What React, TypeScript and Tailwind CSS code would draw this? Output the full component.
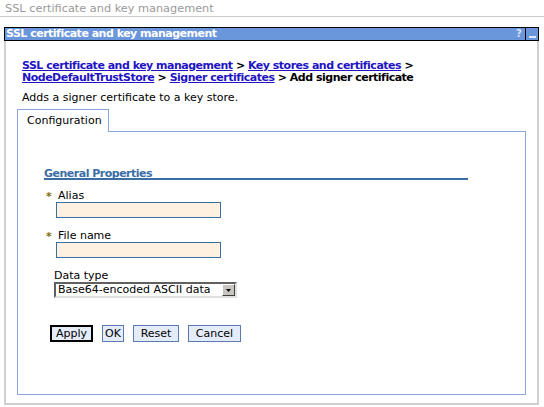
import React from "react";

const F = { fontFamily: '"DejaVu Sans", Verdana, sans-serif' } as React.CSSProperties;

function Star() {
  return <span className="inline-block w-[14px] pl-[2px] text-[#807000] text-[11px] leading-none font-bold">*</span>;
}

const LINK = "text-[#2214c4] underline";

export default function App() {
  return (
    <div className="w-[544px] h-[407px] bg-white overflow-hidden" style={F}>
      <div className="h-[17px] border-b border-[#cccccc] pl-[5px] text-[11.3px] leading-[17px] text-[#9a9a9a]">
        SSL certificate and key management
      </div>
      <div className="mt-[10px] ml-[4px] w-[535px]">
        <div className="flex h-[14px] border border-black bg-[#6a96dc]">
          <div className="flex-1 pl-[1px] text-[11px] leading-[12px] font-bold tracking-[-0.5px] text-white">
            SSL certificate and key management
          </div>
          <div className="w-[9px] text-[10px] leading-[12px] text-[#d8e4f8] font-bold">?</div>
          <div className="w-[13px] border-l border-black flex items-end justify-center pb-[2px]">
            <div className="w-[7px] h-[2px] bg-[#dde6f6]" />
          </div>
        </div>
        <div className="border-x-2 border-b-2 border-[#d0d0d0] h-[364px] pt-[19px]">
          <div className="pl-[16px] text-[11px] leading-[12px] font-bold tracking-[-0.5px] text-black">
            <div>
              <span className={LINK}>SSL certificate and key management</span> &gt;{" "}
              <span className={LINK}>Key stores and certificates</span> &gt;
            </div>
            <div>
              <span className={LINK}>NodeDefaultTrustStore</span> &gt;{" "}
              <span className={LINK}>Signer certificates</span> &gt; Add signer certificate
            </div>
          </div>
          <div className="pl-[16px] mt-[8px] text-[11px] leading-[12px] text-black">
            Adds a signer certificate to a key store.
          </div>
          <div className="ml-[11px] mr-[11px] mt-[5px]">
            <div className="flex h-[23px]">
              <div className="w-[92px] border-t border-x border-[#8aa6dc] pl-[9px] pt-[5px] text-[11px] leading-[12px] text-black">
                Configuration
              </div>
              <div className="flex-1 border-b border-[#8aa6dc]" />
            </div>
            <div className="h-[263px] border-x border-b border-[#8aa6dc] pl-[26px] pt-[36px]">
              <div className="w-[424px] h-[12px] border-b-2 border-[#3a6ea5] text-[11px] leading-[11px] font-bold tracking-[-0.5px] text-[#3a6ea5]">
                General Properties
              </div>
              <div className="mt-[10px] text-[11px] leading-[12px] text-black">
                <div className="h-[12px] flex items-center"><Star />Alias</div>
                <div className="ml-[12px] w-[165px] h-[16px] border border-[#3a6ea5] bg-[#fff1e0]" />
              </div>
              <div className="mt-[12px] text-[11px] leading-[12px] text-black">
                <div className="h-[12px] flex items-center"><Star />File name</div>
                <div className="ml-[12px] w-[165px] h-[16px] border border-[#3a6ea5] bg-[#fff1e0]" />
              </div>
              <div className="mt-[12px] ml-[10px] text-[11px] leading-[12px] text-black">
                <div className="h-[12px]">Data type</div>
                <div className="flex w-[183px] h-[16px] border-2 border-t-[#606060] border-l-[#606060] border-b-[#e0e0e0] border-r-[#e0e0e0] bg-white">
                  <div className="flex-1 pl-[2px] leading-[12px]">Base64-encoded ASCII data</div>
                  <div className="w-[13px] h-[12px] bg-[#c8c4c0] border border-t-white border-l-white border-b-[#404040] border-r-[#404040] flex items-center justify-center">
                    <svg width="5" height="3" viewBox="0 0 5 3"><path d="M0 0h5L2.5 3z" fill="#000" /></svg>
                  </div>
                </div>
              </div>
              <div className="mt-[27px] ml-[6px] flex gap-[9px] text-[11px] leading-[12px] text-black">
                <div className="h-[17px] w-[43px] border-2 border-black bg-[#e4ecfa] flex items-center justify-center">Apply</div>
                <div className="h-[17px] w-[22px] border border-[#5a7ab0] bg-[#e4ecfa] flex items-center justify-center">OK</div>
                <div className="h-[17px] w-[46px] border border-[#5a7ab0] bg-[#e4ecfa] flex items-center justify-center">Reset</div>
                <div className="h-[17px] w-[53px] border border-[#5a7ab0] bg-[#e4ecfa] flex items-center justify-center">Cancel</div>
              </div>
            </div>
          </div>
        </div>
      </div>
    </div>
  );
}
